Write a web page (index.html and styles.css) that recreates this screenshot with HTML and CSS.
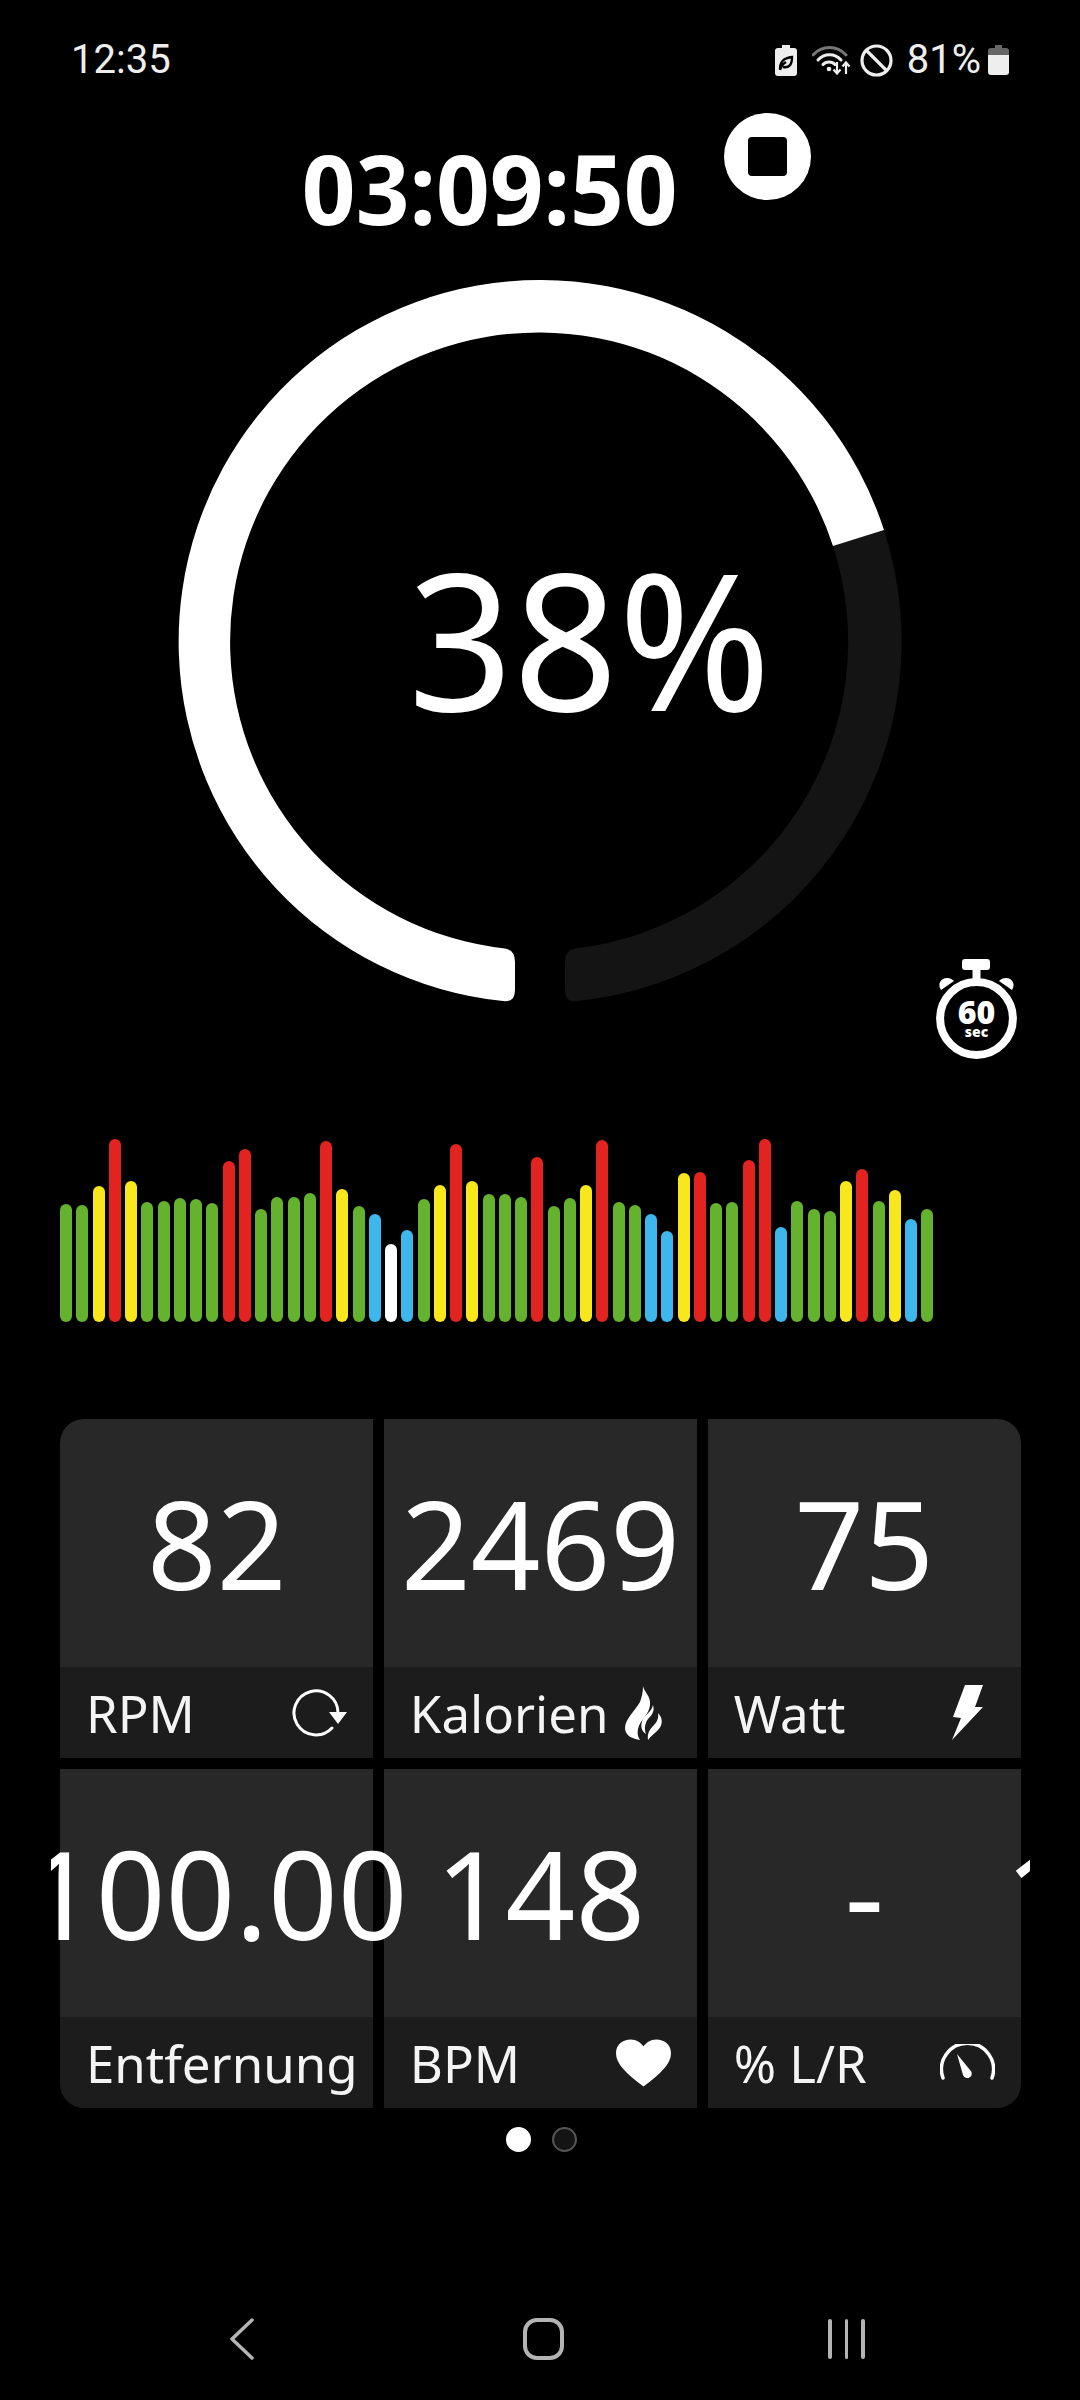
FILE: index.html
```html
<!DOCTYPE html>
<html lang="en">
<head>
  <meta charset="UTF-8">
  <meta name="viewport" content="width=device-width, initial-scale=1.0">
  <title>Workout</title>
  <link rel="stylesheet" href="styles.css">
</head>
<body>
  <div class="status-bar">
    <span class="clock">12:35</span>
    <div class="status-icons">
      <svg class="ic-saver" viewBox="0 0 22 31"><path fill="#eee" d="M7 0h8v3h4a3 3 0 0 1 3 3v22a3 3 0 0 1-3 3H3a3 3 0 0 1-3-3V6a3 3 0 0 1 3-3h4z"/><path fill="none" stroke="#000" stroke-width="2.4" d="M5 24c0-8 4-11 12-12 0 8-3 11-9 10M5 25c1-4 3-6 6-8"/></svg>
      <svg class="ic-wifi" viewBox="0 0 40 30"><path fill="none" stroke="#777" stroke-width="3" stroke-linecap="round" d="M1 10C10 0 25 0 34 10"/><path fill="none" stroke="#eee" stroke-width="3" stroke-linecap="round" d="M6 15C12 8 23 8 29 15M11 19.500C14 16 20 16 23 19.500"/><circle cx="17" cy="24" r="2.300" fill="#eee"/><path fill="none" stroke="#eee" stroke-width="2.200" d="M25 17v11M21.500 24.500l3.500 4 3.500-4M34 29V18M30.500 21.500l3.500-4 3.500 4"/></svg>
      <svg class="ic-ban" viewBox="0 0 33 33"><circle cx="16.500" cy="16.500" r="14.500" fill="none" stroke="#eee" stroke-width="3.200"/><path stroke="#eee" stroke-width="3.200" d="M6.500 6.500l20 20"/></svg>
      <span class="batt-text">81%</span>
      <svg class="ic-batt" viewBox="0 0 21 30"><path fill="#666" d="M7 0h7v3h4a3 3 0 0 1 3 3v5H0V6a3 3 0 0 1 3-3h4z"/><path fill="#eee" d="M0 10h21v17a3 3 0 0 1-3 3H3a3 3 0 0 1-3-3z"/></svg>
    </div>
  </div>

  <div class="timer-row">
    <span class="timer">03:09:50</span>
    <div class="stop-btn"><div class="stop-square"></div></div>
  </div>

  <div class="ring-wrap">
    <svg class="ring" viewBox="0 0 724 728">
      <!-- center 362,363.5 outer r 361.5 inner r 309 -->
      <path fill="#141414" d="M706 252A361.500 361.500 0 0 1 399 723.100Q387 724.500 387 712V684Q387 672 397 670.500A309 309 0 0 0 655 268z"/>
      <path fill="#fff" d="M706 252A361.500 361.500 0 1 0 325 723.100Q337 724.500 337 712V684Q337 672 327 670.500A309 309 0 1 1 655 268z"/>
    </svg>
    <span class="percent">38%</span>
    <svg class="sixty" viewBox="0 0 84 104">
      <rect x="28" y="0" width="28" height="11" rx="3" fill="#fff"/>
      <rect x="38.500" y="8" width="8" height="14" fill="#fff"/>
      <path fill="#fff" d="M7 31C3 25 7 19 13 19 16 19 18 20 20 22zM78 31C82 25 78 19 72 19 69 19 67 20 65 22z"/>
      <circle cx="42.500" cy="59.500" r="36.400" fill="none" stroke="#fff" stroke-width="8"/>
      <text x="42.500" y="65" class="sixty-num" text-anchor="middle">60</text>
      <text x="42.500" y="78" class="sixty-sec" text-anchor="middle">sec</text>
    </svg>
  </div>

  <div class="chart">
    <i class="bar g" style="height:118px"></i><i class="bar g" style="height:117px"></i><i class="bar y" style="height:136px"></i><i class="bar r" style="height:183px"></i><i class="bar y" style="height:141px"></i><i class="bar g" style="height:120px"></i>
    <i class="bar g" style="height:121px"></i><i class="bar g" style="height:124px"></i><i class="bar g" style="height:123px"></i><i class="bar g" style="height:119px"></i><i class="bar r" style="height:161px"></i><i class="bar r" style="height:173px"></i>
    <i class="bar g" style="height:113px"></i><i class="bar g" style="height:125px"></i><i class="bar g" style="height:125px"></i><i class="bar g" style="height:129px"></i><i class="bar r" style="height:181px"></i><i class="bar y" style="height:133px"></i>
    <i class="bar g" style="height:116px"></i><i class="bar b" style="height:108px"></i><i class="bar w" style="height:78px"></i><i class="bar b" style="height:92px"></i><i class="bar g" style="height:123px"></i><i class="bar y" style="height:137px"></i>
    <i class="bar r" style="height:178px"></i><i class="bar y" style="height:141px"></i><i class="bar g" style="height:128px"></i><i class="bar g" style="height:128px"></i><i class="bar g" style="height:125px"></i><i class="bar r" style="height:165px"></i>
    <i class="bar g" style="height:116px"></i><i class="bar g" style="height:124px"></i><i class="bar y" style="height:137px"></i><i class="bar r" style="height:182px"></i><i class="bar g" style="height:120px"></i><i class="bar g" style="height:117px"></i>
    <i class="bar b" style="height:108px"></i><i class="bar b" style="height:91px"></i><i class="bar y" style="height:149px"></i><i class="bar r" style="height:150px"></i><i class="bar g" style="height:119px"></i><i class="bar g" style="height:120px"></i>
    <i class="bar r" style="height:162px"></i><i class="bar r" style="height:183px"></i><i class="bar b" style="height:95px"></i><i class="bar g" style="height:121px"></i><i class="bar g" style="height:113px"></i><i class="bar g" style="height:111px"></i>
    <i class="bar y" style="height:141px"></i><i class="bar r" style="height:153px"></i><i class="bar g" style="height:121px"></i><i class="bar y" style="height:132px"></i><i class="bar b" style="height:103px"></i><i class="bar g" style="height:113px"></i>
  </div>

  <div class="pager">
    <div class="grid">
      <div class="cell">
        <div class="value">82</div>
        <div class="label"><span>RPM</span>
          <svg class="ic ic-rpm" viewBox="0 0 55 48"><path fill="none" stroke="#fff" stroke-width="3" stroke-linecap="round" d="M46 24A22 22 0 1 0 40 39"/><path fill="#fff" d="M37 23H55L46 35z"/></svg>
        </div>
      </div>
      <div class="cell">
        <div class="value">2469</div>
        <div class="label"><span>Kalorien</span>
          <svg class="ic ic-flame" viewBox="0 0 37 54"><path fill="#fff" d="M18 0C19 6 26 10 25 19 24 29 15 34 13 43 12 48 13 51 15 54 8 53 0 50 0 42 0 33 10 25 15 16 17 11 18 5 18 0z"/><path fill="#fff" d="M28 19C30 25 27 29 23 33 20 37 19 43 21 48 16 45 15 39 18 33 21 28 27 25 28 19z"/><path fill="#fff" d="M33 27C38 32 38 39 33 44 29 48 26 50 23 54 22 47 25 43 29 39 32 36 34 32 33 27z"/></svg>
        </div>
      </div>
      <div class="cell">
        <div class="value">75</div>
        <div class="label"><span>Watt</span>
          <svg class="ic ic-bolt" viewBox="0 0 31 55"><path fill="#fff" d="M13 0H31L23 22H31L0 55 9 33 1 32z"/></svg>
        </div>
      </div>
      <div class="cell">
        <div class="value value-wide">100.00</div>
        <div class="label"><span>Entfernung</span></div>
      </div>
      <div class="cell">
        <div class="value">148</div>
        <div class="label"><span>BPM</span>
          <svg class="ic ic-heart" viewBox="0 0 56 48"><path fill="#fff" d="M28 48C10 34 0 25 0 14 0 5 7 0 15 0c6 0 10 3 13 7 3-4 7-7 13-7 8 0 15 5 15 14 0 11-10 20-28 34z"/></svg>
        </div>
      </div>
      <div class="cell">
        <div class="value">-</div>
        <div class="label"><span>% L/R</span>
          <svg class="ic ic-gauge" viewBox="0 0 55 37"><path fill="none" stroke="#fff" stroke-width="3.500" stroke-linecap="round" d="M3 34A26 26 0 1 1 52 34"/><path fill="#fff" d="M17 10L30 26A4.500 4.500 0 1 1 23 31z"/></svg>
        </div>
      </div>
    </div>
    <span class="peek">1</span>
  </div>

  <div class="dots">
    <i class="dot dot-on"></i>
    <i class="dot"></i>
  </div>

  <div class="nav">
    <svg class="nav-back" viewBox="0 0 24 42"><path fill="none" stroke="#b4b4b4" stroke-width="3.500" stroke-linecap="round" stroke-linejoin="round" d="M22 2L2 21l20 19"/></svg>
    <div class="nav-home"></div>
    <div class="nav-recent"><i></i><i></i><i></i></div>
  </div>
</body>
</html>
```

FILE: styles.css
```css
html, body {
  margin: 0;
  padding: 0;
  background: #000;
}
body {
  width: 1080px;
  height: 2400px;
  overflow: hidden;
  display: flex;
  flex-direction: column;
  color: #fff;
  font-family: "Noto Sans", "Open Sans", sans-serif;
}

/* status bar */
.status-bar {
  height: 113px;
  box-sizing: border-box;
  padding: 38px 71px 0 71px;
  display: flex;
  justify-content: space-between;
  align-items: flex-start;
}
.clock {
  font-family: Roboto, sans-serif;
  font-size: 40px;
  line-height: 44px;
  color: #eee;
}
.status-icons {
  display: flex;
  align-items: center;
  height: 44px;
}
.status-icons svg {
  display: block;
}
.ic-saver { width: 22px; height: 31px; margin-right: 15px; }
.ic-wifi { width: 40px; height: 30px; margin-right: 8px; }
.ic-ban { width: 33px; height: 33px; margin-right: 14px; }
.ic-batt { width: 21px; height: 30px; margin-left: 7px; }
.batt-text {
  font-family: Roboto, sans-serif;
  font-size: 40px;
  line-height: 44px;
  color: #eee;
}

/* timer */
.timer-row {
  height: 165px;
  position: relative;
  display: flex;
  justify-content: center;
  align-items: flex-start;
  padding-right: 100px;
}
.timer {
  font-size: 97px;
  font-weight: 700;
  line-height: 112px;
  margin-top: 18px;
  transform: scaleX(0.97);
}
.stop-btn {
  position: absolute;
  left: 724px;
  top: 0;
  width: 87px;
  height: 87px;
  border-radius: 50%;
  background: #fff;
  display: flex;
  align-items: center;
  justify-content: center;
}
.stop-square {
  width: 39px;
  height: 39px;
  border-radius: 4px;
  background: #000;
}

/* ring */
.ring-wrap {
  position: relative;
  height: 860px;
  display: flex;
  justify-content: center;
  align-items: flex-start;
}
.ring {
  width: 724px;
  height: 728px;
  display: block;
}
.percent {
  position: absolute;
  left: 408px;
  top: 240px;
  font-size: 190px;
  line-height: 240px;
  transform: scaleX(0.967);
  transform-origin: left center;
}
.sixty {
  position: absolute;
  left: 934px;
  top: 681px;
  width: 84px;
  height: 104px;
}
.sixty-num {
  font-family: "Open Sans", sans-serif;
  font-weight: 800;
  font-size: 32px;
  fill: #fff;
}
.sixty-sec {
  font-family: "Open Sans", sans-serif;
  font-weight: 800;
  font-size: 14px;
  fill: #fff;
}

/* bar chart */
.chart {
  height: 184px;
  padding-left: 60px;
  display: flex;
  align-items: flex-end;
  gap: 4.26px;
}
.bar {
  display: block;
  width: 12px;
  border-radius: 6px;
}
.g { background: #65b22e; }
.y { background: #f8e71c; }
.r { background: #e2231f; }
.b { background: #3db7ec; }
.w { background: #fff; }

/* data grid */
.pager {
  position: relative;
  margin: 97px 50px 0 51px;
  overflow: hidden;
}
.grid {
  margin: 0 9px;
  display: grid;
  grid-template-columns: repeat(3, minmax(0, 1fr));
  column-gap: 10.500px;
  row-gap: 11px;
}
.cell {
  height: 339px;
  min-width: 0;
  display: flex;
  flex-direction: column;
}
.value {
  height: 248px;
  background: #282828;
  display: flex;
  align-items: center;
  justify-content: center;
  font-size: 122px;
  line-height: 1;
  white-space: nowrap;
}
.value-wide {
  position: relative;
  z-index: 1;
}
.cell:nth-child(1) .value { border-top-left-radius: 24px; }
.cell:nth-child(3) .value { border-top-right-radius: 24px; }
.cell:nth-child(4) .label { border-bottom-left-radius: 24px; }
.cell:nth-child(6) .label { border-bottom-right-radius: 24px; }
.label {
  flex: 1;
  background: #1c1c1c;
  display: flex;
  align-items: center;
  justify-content: space-between;
  padding: 0 26px 0 26px;
  font-size: 51px;
  color: #f4f4f4;
}
.ic { display: block; flex: none; }
.ic-rpm { width: 55px; height: 48px; }
.ic-flame { width: 37px; height: 54px; margin-right: 9px; }
.ic-bolt { width: 31px; height: 55px; margin-right: 12px; }
.ic-heart { width: 55px; height: 48px; }
.ic-gauge { width: 55px; height: 37px; }
.peek {
  position: absolute;
  left: 954px;
  top: 413px;
  font-size: 122px;
  line-height: 1;
}

/* page dots */
.dots {
  display: flex;
  justify-content: center;
  gap: 21px;
  margin-top: 19px;
  padding-left: 3px;
}
.dot {
  display: block;
  width: 25px;
  height: 25px;
  box-sizing: border-box;
  border-radius: 50%;
  border: 2px solid #555;
  background: #141414;
}
.dot-on {
  border: 0;
  background: #fff;
}

/* android nav bar */
.nav {
  margin-top: 166px;
  height: 42px;
  display: flex;
  align-items: center;
  padding-left: 230px;
}
.nav-back { width: 24px; height: 42px; display: block; }
.nav-home {
  width: 41px;
  height: 42px;
  margin-left: 269px;
  box-sizing: border-box;
  border: 4px solid #b4b4b4;
  border-radius: 14px;
}
.nav-recent {
  margin-left: 264px;
  display: flex;
  gap: 13px;
}
.nav-recent i {
  display: block;
  width: 3.500px;
  height: 40px;
  border-radius: 2px;
  background: #b4b4b4;
}
```
